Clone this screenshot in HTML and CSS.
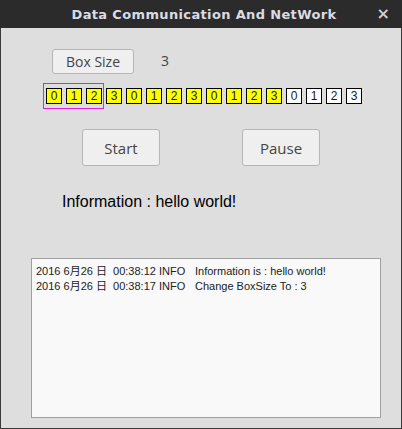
FILE: index.html
```html
<!DOCTYPE html>
<html>
<head>
<meta charset="utf-8">
<link rel="stylesheet" href="styles.css">
</head>
<body>
<div class="window">
  <div class="titlebar">
    <span class="title">Data Communication And NetWork</span>
    <span class="close">×</span>
  </div>
  <div class="content">
    <div class="size-row">
      <button class="btn btn-size">Box Size</button>
      <span class="size-val">3</span>
    </div>
    <div class="boxes">
      <div class="window-frame"></div>
      <span class="box y">0</span><span class="box y">1</span><span class="box y">2</span><span class="box y">3</span>
      <span class="box y">0</span><span class="box y">1</span><span class="box y">2</span><span class="box y">3</span>
      <span class="box y">0</span><span class="box y">1</span><span class="box y">2</span><span class="box y">3</span>
      <span class="box">0</span><span class="box">1</span><span class="box">2</span><span class="box">3</span>
    </div>
    <div class="actions">
      <button class="btn btn-big">Start</button>
      <button class="btn btn-big">Pause</button>
    </div>
    <div class="info">Information : hello world!</div>
    <div class="log">
      <div class="log-line"><span class="ts">2016 6月26 日&nbsp;&nbsp;00:38:12 INFO</span><span class="msg">Information is : hello world!</span></div>
      <div class="log-line"><span class="ts">2016 6月26 日&nbsp;&nbsp;00:38:17 INFO</span><span class="msg">Change BoxSize To : 3</span></div>
    </div>
  </div>
</div>
</body>
</html>
```

FILE: styles.css
```css
* { box-sizing: border-box; }
html, body { margin: 0; padding: 0; background: #dcdcdc; }
.window {
  width: 402px;
  height: 429px;
  background: #dedede;
  border: 1px solid #3a3a3a;
  border-top: none;
  display: flex;
  flex-direction: column;
}
.titlebar {
  height: 28px;
  background: #2b2b2b;
  margin: 0 -1px;
  display: flex;
  align-items: center;
  position: relative;
}
.title {
  flex: 1;
  text-align: center;
  font-family: "DejaVu Sans", sans-serif;
  font-weight: bold;
  font-size: 13px;
  letter-spacing: 0.35px;
  color: #d8dce4;
  padding-left: 6px;
}
.close {
  position: absolute;
  right: 12px;
  top: 4px;
  font-family: "DejaVu Sans", sans-serif;
  font-weight: bold;
  font-size: 16px;
  color: #d0d0d0;
}
.content {
  flex: 1;
  display: flex;
  flex-direction: column;
  padding-left: 51px;
}
.btn {
  font-family: "Open Sans", "Noto Sans", sans-serif;
  color: #454545;
  background: #efefef;
  border: 1px solid #b6b6b6;
  border-radius: 3px;
  padding: 0;
}
.size-row {
  margin-top: 21px;
  display: flex;
  align-items: center;
  height: 25px;
}
.btn-size {
  width: 82px;
  height: 25px;
  font-size: 14px;
}
.size-val {
  margin-left: 27px;
  margin-top: -3px;
  font-family: "Open Sans", "Noto Sans", sans-serif;
  font-size: 14px;
  color: #444;
}
.boxes {
  position: relative;
  margin-top: 14px;
  margin-left: -6px;
  display: flex;
  gap: 4px;
  height: 16px;
}
.window-frame {
  position: absolute;
  left: -3px;
  top: -5px;
  width: 61px;
  height: 26px;
  border: 1px solid #e020e0;
}
.box {
  width: 16px;
  height: 16px;
  border: 1px solid #000;
  background: #fff;
  font-family: "Liberation Sans", sans-serif;
  font-size: 12px;
  line-height: 14px;
  text-align: center;
  color: #1a1a1a;
}
.box.y { background: #ffff00; }
.actions {
  margin-top: 25px;
  margin-left: 30px;
  display: flex;
  gap: 82px;
}
.btn-big {
  width: 78px;
  height: 37px;
  font-size: 15px;
}
.info {
  margin-top: 27px;
  margin-left: 10px;
  font-family: "Liberation Sans", sans-serif;
  font-size: 16px;
  color: #000;
}
.log {
  margin-top: 47px;
  margin-left: -21px;
  width: 350px;
  height: 160px;
  background: #f9f9f9;
  border: 1px solid #a0a0a0;
  padding: 5px 0 0 4px;
}
.log-line {
  font-family: "Liberation Sans", "Noto Sans CJK SC", sans-serif;
  font-size: 11px;
  line-height: 15px;
  color: #222;
  display: flex;
  white-space: nowrap;
}
.ts { width: 159px; }
```
